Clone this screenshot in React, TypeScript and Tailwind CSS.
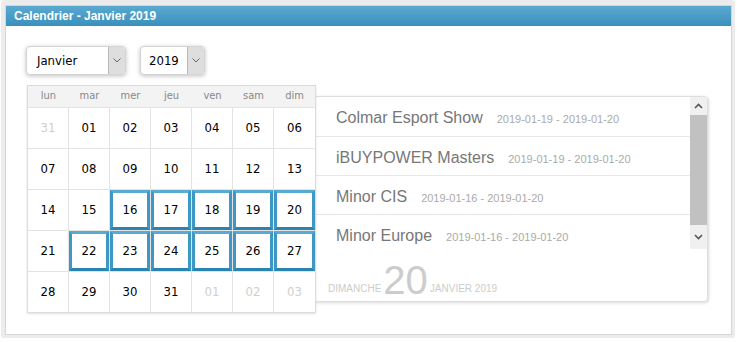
import React from "react";

const weeks: { d: string; muted?: boolean; sel?: boolean }[][] = [
  [{ d: "31", muted: true }, { d: "01" }, { d: "02" }, { d: "03" }, { d: "04" }, { d: "05" }, { d: "06" }],
  [{ d: "07" }, { d: "08" }, { d: "09" }, { d: "10" }, { d: "11" }, { d: "12" }, { d: "13" }],
  [{ d: "14" }, { d: "15" }, { d: "16", sel: true }, { d: "17", sel: true }, { d: "18", sel: true }, { d: "19", sel: true }, { d: "20", sel: true }],
  [{ d: "21" }, { d: "22", sel: true }, { d: "23", sel: true }, { d: "24", sel: true }, { d: "25", sel: true }, { d: "26", sel: true }, { d: "27", sel: true }],
  [{ d: "28" }, { d: "29" }, { d: "30" }, { d: "31" }, { d: "01", muted: true }, { d: "02", muted: true }, { d: "03", muted: true }],
];

const days = ["lun", "mar", "mer", "jeu", "ven", "sam", "dim"];

const events = [
  { name: "Colmar Esport Show", dates: "2019-01-19 - 2019-01-20" },
  { name: "iBUYPOWER Masters", dates: "2019-01-19 - 2019-01-20" },
  { name: "Minor CIS", dates: "2019-01-16 - 2019-01-20" },
  { name: "Minor Europe", dates: "2019-01-16 - 2019-01-20" },
];

const tahoma = "'DejaVu Sans Condensed', 'DejaVu Sans', Tahoma, sans-serif";

function Chevron({ up }: { up?: boolean }) {
  return (
    <svg width="9" height="6" viewBox="0 0 9 6">
      <path d={up ? "M1 5 L4.5 1.5 L8 5" : "M1 1 L4.5 4.5 L8 1"} fill="none" stroke="#555" strokeWidth="1.6" />
    </svg>
  );
}

function Select({ label, width, pad }: { label: string; width: string; pad: string }) {
  return (
    <div className={`flex h-[29px] ${width} rounded-[4px] border border-[#d4d4d4] bg-white shadow-[0_1px_4px_rgba(0,0,0,0.25)] overflow-hidden`}>
      <div className={`flex-1 flex items-center ${pad} text-[13px] text-black`} style={{ fontFamily: tahoma }}>
        {label}
      </div>
      <div className="w-[17px] bg-[#dedede] border-l border-[#b9b9b9] flex items-center justify-center">
        <svg width="8" height="5" viewBox="0 0 8 5">
          <path d="M0.5 0.5 L4 4 L7.5 0.5" fill="none" stroke="#666" strokeWidth="1" />
        </svg>
      </div>
    </div>
  );
}

export default function App() {
  return (
    <div className="w-[737px] h-[342px] bg-white pt-0 pl-[1px]" style={{ fontFamily: "'Liberation Sans', Arial, sans-serif" }}>
      <div className="w-[734px] h-[338px] border-[#ececec] border-t-[5px] border-l-[4px] border-r-[3px] border-b-[3px] rounded-[3px]">
        <div className="h-full border border-[#d6d6d6] flex flex-col">
          <div className="h-[20px] bg-gradient-to-b from-[#5aa9d0] to-[#3990bd] text-white text-[12px] font-bold flex items-center pl-[8px] shrink-0">
            Calendrier - Janvier 2019
          </div>
          <div className="flex-1 bg-white pl-[20px] pt-[20px]">
            <div className="flex gap-[14px]">
              <Select label="Janvier" width="w-[100px]" pad="pl-[10px]" />
              <Select label="2019" width="w-[65px]" pad="pl-[8px]" />
            </div>
            <div className="flex mt-[10px] ml-[1px]">
              <div className="relative z-10 w-[289px] border border-[#dcdcdc] bg-white shadow-[0_1px_2px_rgba(0,0,0,0.12)]" style={{ fontFamily: tahoma }}>
                <div className="grid grid-cols-7 h-[21px] bg-[#f3f3f3]">
                  {days.map((d) => (
                    <div key={d} className="flex items-center justify-center text-[11px] text-[#888]">
                      {d}
                    </div>
                  ))}
                </div>
                {weeks.map((w, i) => (
                  <div key={i} className="grid grid-cols-7 h-[41px] border-t border-[#e3e3e3]">
                    {w.map((c, j) => (
                      <div
                        key={j}
                        className={`flex items-center justify-center text-[13px] ${j < 6 ? "border-r border-[#e3e3e3]" : ""} ${c.muted ? "text-[#cfcfcf]" : "text-black"}`}
                      >
                        {c.sel ? (
                          <div className="w-full h-full flex items-center justify-center border-[3px] border-t-[#5aabd1] border-x-[#3f98c4] border-b-[#2b83b3]">
                            {c.d}
                          </div>
                        ) : (
                          c.d
                        )}
                      </div>
                    ))}
                  </div>
                ))}
              </div>
              <div className="mt-[11px] w-[394px] h-[206px] -ml-[2px] rounded-r-[4px] border border-[#dedede] shadow-[1px_1px_3px_rgba(0,0,0,0.15)] bg-white flex flex-col">
                <div className="flex h-[152px]">
                  <div className="flex-1 overflow-hidden">
                    {events.map((e, i) => (
                      <div key={i} className={`${i === 0 ? "h-[40px] pt-[3px]" : "h-[39px] pt-[3px]"} flex items-center pl-[21px] ${i < 3 ? "border-b border-[#e6e6e6]" : ""}`}>
                        <span className="text-[16px] text-[#777]">{e.name}</span>
                        <span className="text-[11px] text-[#aaa] ml-[14px] mt-[3px]">{e.dates}</span>
                      </div>
                    ))}
                  </div>
                  <div className="w-[17px] bg-[#f0f0f0] flex flex-col">
                    <div className="h-[18px] flex items-center justify-center">
                      <Chevron up />
                    </div>
                    <div className="h-[110px] bg-[#c1c1c1]" />
                    <div className="flex-1 flex items-center justify-center">
                      <Chevron />
                    </div>
                  </div>
                </div>
                <div className="flex items-end pl-[13px] pt-[11px] text-[#ccc]">
                  <span className="text-[10px] mb-[4px]">DIMANCHE</span>
                  <span className="text-[40px] leading-[40px] mx-[2px]">20</span>
                  <span className="text-[10px] mb-[4px]">JANVIER 2019</span>
                </div>
              </div>
            </div>
          </div>
        </div>
      </div>
    </div>
  );
}
